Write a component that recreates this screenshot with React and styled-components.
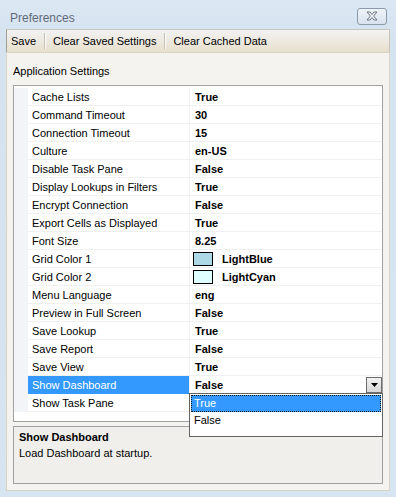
import React from "react";
import styled, { createGlobalStyle } from "styled-components";

const GlobalStyle = createGlobalStyle`
  html, body {
    margin: 0;
    padding: 0;
    background: #d7e4f2;
  }
  body {
    font-family: "Liberation Sans", Arial, sans-serif;
    font-size: 11px;
    color: #000;
  }
`;

const Window = styled.div`
  width: 396px;
  height: 497px;
  box-sizing: border-box;
  background: linear-gradient(to bottom, #dce7f3 0px, #d5e2f0 40px, #d7e4f2 100%);
  display: flex;
  flex-direction: column;
  padding: 0 6px 6px 6px;
`;

const TitleBar = styled.div`
  height: 29px;
  display: flex;
  align-items: center;
  justify-content: space-between;
  padding: 0 3px 0 4px;
`;

const Title = styled.div`
  font-size: 12px;
  color: #5f6b78;
  padding-top: 6px;
`;

const CloseButton = styled.div`
  width: 28px;
  height: 15px;
  margin-top: 3px;
  border: 1px solid #8c9bac;
  border-radius: 3px;
  background: linear-gradient(to bottom, #eef3f8, #d8e2ee);
  display: flex;
  align-items: center;
  justify-content: center;
`;

const Toolbar = styled.div`
  height: 22px;
  display: flex;
  align-items: center;
  background: linear-gradient(to bottom, #f2f2f2 0%, #eeeae2 45%, #e7dfcc 100%);
  border: 1px solid #c9c4b8;
  border-left-color: #a59f90;
  border-bottom: none;
`;

const ToolButton = styled.div`
  font-size: 11px;
  padding: 0 8px 0 ${(p) => (p.$first ? "4px" : "7px")};
  height: 22px;
  line-height: 22px;
`;

const Separator = styled.div`
  width: 1px;
  height: 16px;
  background: #c6c1b4;
  border-right: 1px solid #fbfaf7;
`;

const Content = styled.div`
  flex: 1;
  background: #f5f3ef;
  border: 1px solid #d9d3c4;
  display: flex;
  flex-direction: column;
  padding: 0 6px 6px 6px;
  position: relative;
`;

const SectionLabel = styled.div`
  font-size: 11px;
  padding: 12px 0 8px 0;
`;

const Grid = styled.div`
  border: 1px solid #a0a0a0;
  background: #fff;
  box-sizing: border-box;
  height: 337px;
  padding-top: 2px;
  position: relative;
`;

const Row = styled.div`
  display: grid;
  grid-template-columns: 14px 162px 1fr;
  height: 18px;
`;

const Gutter = styled.div`
  background: #f3f4f7;
`;

const NameCell = styled.div`
  display: flex;
  align-items: center;
  padding-left: 4px;
  border-bottom: 1px solid #f0f0f0;
  border-right: 1px solid #f0f0f0;
  background: ${(p) => (p.$selected ? "#3399ff" : "#fff")};
  color: ${(p) => (p.$selected ? "#fff" : "#000")};
  ${(p) => p.$selected && "border-bottom-color: #3399ff;"}
`;

const ValueCell = styled.div`
  display: flex;
  align-items: center;
  padding-left: 5px;
  font-weight: bold;
  border-bottom: 1px solid #f0f0f0;
  position: relative;
`;

const Swatch = styled.span`
  width: 18px;
  height: 12px;
  border: 1px solid #000;
  background: ${(p) => p.$color};
  margin-right: 9px;
  margin-left: -2px;
`;

const DropButton = styled.div`
  position: absolute;
  right: 0;
  top: 1px;
  width: 16px;
  height: 16px;
  box-sizing: border-box;
  border: 1px solid #6c6c6c;
  background: linear-gradient(to bottom, #f2f2f2, #d8d8d8);
  display: flex;
  align-items: center;
  justify-content: center;
`;

const DropList = styled.div`
  position: absolute;
  left: 182px;
  top: 340px;
  width: 194px;
  height: 44px;
  box-sizing: border-box;
  background: #fff;
  border: 1px solid #646464;
  z-index: 2;
  padding: 1px;
`;

const Option = styled.div`
  height: 17px;
  line-height: 15px;
  padding-left: 2px;
  box-sizing: border-box;
  background: ${(p) => (p.$active ? "#3399ff" : "#fff")};
  color: ${(p) => (p.$active ? "#fff" : "#000")};
  border: 1px dotted ${(p) => (p.$active ? "#1a1a1a" : "transparent")};
  font-size: 11px;
`;

const Description = styled.div`
  margin-top: 4px;
  height: 58px;
  border: 1px solid #a0a0a0;
  background: #f0efec;
  padding: 3px 5px 4px 5px;
  box-sizing: border-box;
`;

const DescTitle = styled.div`
  font-weight: bold;
  font-size: 11px;
  margin-top: 1px;
`;

const DescText = styled.div`
  font-size: 11px;
  margin-top: 4px;
`;

const rows = [
  ["Cache Lists", "True"],
  ["Command Timeout", "30"],
  ["Connection Timeout", "15"],
  ["Culture", "en-US"],
  ["Disable Task Pane", "False"],
  ["Display Lookups in Filters", "True"],
  ["Encrypt Connection", "False"],
  ["Export Cells as Displayed", "True"],
  ["Font Size", "8.25"],
  ["Grid Color 1", "LightBlue", "#add8e6"],
  ["Grid Color 2", "LightCyan", "#e0ffff"],
  ["Menu Language", "eng"],
  ["Preview in Full Screen", "False"],
  ["Save Lookup", "True"],
  ["Save Report", "False"],
  ["Save View", "True"],
  ["Show Dashboard", "False"],
  ["Show Task Pane", ""],
];

function CloseIcon() {
  return (
    <svg width="14" height="10" viewBox="0 0 14 10">
      <path
        d="M2 1 L5 1 L7 3.5 L9 1 L12 1 L8.6 5 L12 9 L9 9 L7 6.5 L5 9 L2 9 L5.4 5 Z"
        fill="#f4f7fa"
        stroke="#5a6675"
        strokeWidth="0.9"
        strokeLinejoin="round"
      />
    </svg>
  );
}

export default function App() {
  return (
    <>
      <GlobalStyle />
      <Window>
        <TitleBar>
          <Title>Preferences</Title>
          <CloseButton>
            <CloseIcon />
          </CloseButton>
        </TitleBar>
        <Toolbar>
          <ToolButton $first>Save</ToolButton>
          <Separator />
          <ToolButton>Clear Saved Settings</ToolButton>
          <Separator />
          <ToolButton>Clear Cached Data</ToolButton>
        </Toolbar>
        <Content>
          <SectionLabel>Application Settings</SectionLabel>
          <Grid>
            {rows.map(([name, value, color]) => {
              const selected = name === "Show Dashboard";
              return (
                <Row key={name}>
                  <Gutter />
                  <NameCell $selected={selected}>{name}</NameCell>
                  <ValueCell>
                    {color && <Swatch $color={color} />}
                    {value}
                    {selected && (
                      <DropButton>
                        <svg width="7" height="4" viewBox="0 0 7 4">
                          <path d="M0 0 L7 0 L3.5 4 Z" fill="#000" />
                        </svg>
                      </DropButton>
                    )}
                  </ValueCell>
                </Row>
              );
            })}
          </Grid>
          <DropList>
            <Option $active>True</Option>
            <Option>False</Option>
          </DropList>
          <Description>
            <DescTitle>Show Dashboard</DescTitle>
            <DescText>Load Dashboard at startup.</DescText>
          </Description>
        </Content>
      </Window>
    </>
  );
}
